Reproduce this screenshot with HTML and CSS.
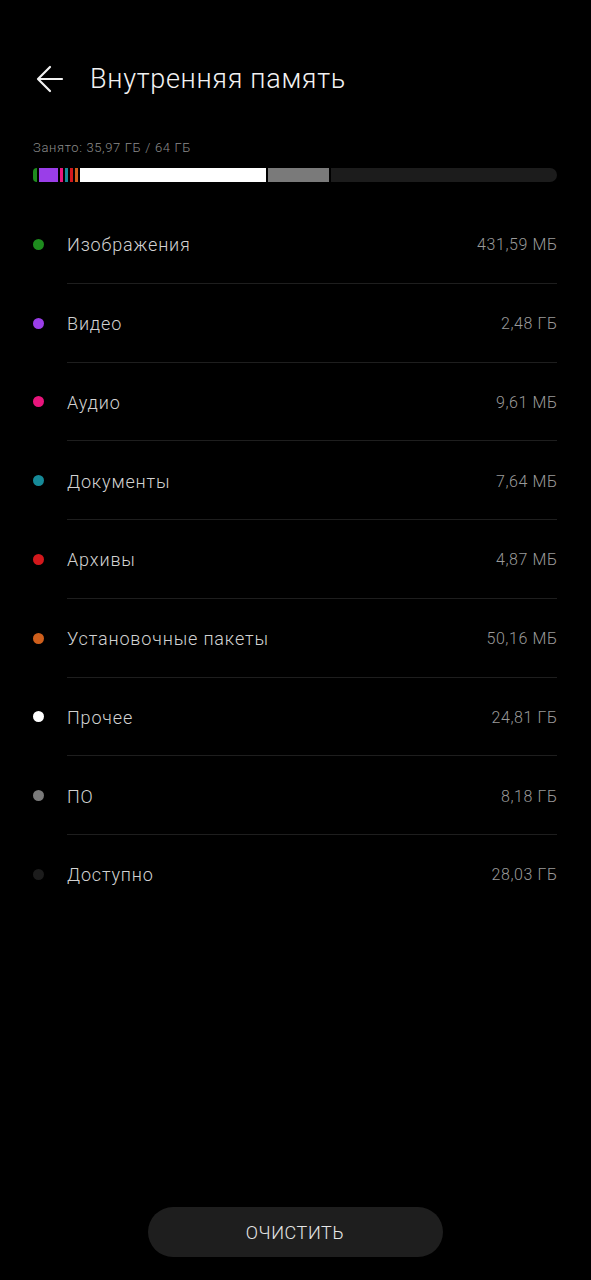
FILE: index.html
```html
<!DOCTYPE html>
<html lang="ru">
<head>
<meta charset="utf-8">
<link rel="stylesheet" href="styles.css">
</head>
<body>
<div class="page">
  <header class="header">
    <svg class="back" width="28" height="28" viewBox="0 0 28 28">
      <path d="M26 14H3M14 2L2 14l12 12" fill="none" stroke="#f2f2f2" stroke-width="2.2" stroke-linecap="round" stroke-linejoin="round"/>
    </svg>
    <h1 class="title">Внутренняя память</h1>
  </header>

  <section class="usage">
    <div class="usage-label">Занято: 35,97 ГБ / 64 ГБ</div>
    <div class="bar">
      <span class="seg seg-first c-green" style="width:4px"></span>
      <span class="seg c-purple" style="width:19px"></span>
      <span class="seg c-pink" style="width:3px"></span>
      <span class="seg c-teal" style="width:3px"></span>
      <span class="seg c-red" style="width:3px"></span>
      <span class="seg c-orange" style="width:3px"></span>
      <span class="seg c-white" style="width:186px"></span>
      <span class="seg c-grey" style="width:61px"></span>
      <span class="seg seg-last c-free"></span>
    </div>
  </section>

  <ul class="list">
    <li class="row"><span class="dot c-green"></span><div class="row-body"><span class="name">Изображения</span><span class="size">431,59 МБ</span></div></li>
    <li class="row"><span class="dot c-purple"></span><div class="row-body"><span class="name">Видео</span><span class="size">2,48 ГБ</span></div></li>
    <li class="row"><span class="dot c-pink"></span><div class="row-body"><span class="name">Аудио</span><span class="size">9,61 МБ</span></div></li>
    <li class="row"><span class="dot c-teal"></span><div class="row-body"><span class="name">Документы</span><span class="size">7,64 МБ</span></div></li>
    <li class="row"><span class="dot c-red"></span><div class="row-body"><span class="name">Архивы</span><span class="size">4,87 МБ</span></div></li>
    <li class="row"><span class="dot c-orange"></span><div class="row-body"><span class="name">Установочные пакеты</span><span class="size">50,16 МБ</span></div></li>
    <li class="row"><span class="dot c-white"></span><div class="row-body"><span class="name">Прочее</span><span class="size">24,81 ГБ</span></div></li>
    <li class="row"><span class="dot c-grey"></span><div class="row-body"><span class="name">ПО</span><span class="size">8,18 ГБ</span></div></li>
    <li class="row"><span class="dot c-free"></span><div class="row-body"><span class="name">Доступно</span><span class="size">28,03 ГБ</span></div></li>
  </ul>

  <div class="actions">
    <button class="clear-btn">ОЧИСТИТЬ</button>
  </div>
</div>
</body>
</html>
```

FILE: styles.css
```css
* { box-sizing: border-box; }
html, body {
  margin: 0;
  padding: 0;
  background: #000;
}
body {
  font-family: "Roboto", "Noto Sans", sans-serif;
  color: #d0d0d0;
}
.page {
  min-height: 1280px;
  display: flex;
  flex-direction: column;
  padding: 0 34px 0 33px;
}
.header {
  display: flex;
  align-items: center;
  height: 58px;
  margin-top: 50px;
}
.back {
  margin-left: 3px;
  flex: none;
}
.title {
  margin: 0 0 0 26px;
  font-size: 27px;
  font-weight: 300;
  color: #f2f2f2;
  letter-spacing: 0.7px;
}
.usage {
  margin-top: 32px;
}
.usage-label {
  font-size: 13px;
  line-height: 16px;
  font-weight: 300;
  color: #8c8c8c;
  letter-spacing: 0.65px;
}
.bar {
  margin-top: 12px;
  height: 14px;
  display: flex;
  gap: 2px;
}
.seg {
  display: block;
  height: 100%;
  flex: none;
}
.seg-first { border-radius: 7px 0 0 7px; }
.seg-last { flex: 1; border-radius: 0 7px 7px 0; }
.c-green { background: #1e8c1e; }
.c-purple { background: #9a3ee8; }
.c-pink { background: #e8157c; }
.c-teal { background: #168a98; }
.c-red { background: #d3181c; }
.c-orange { background: #cf5f1c; }
.c-white { background: #ffffff; }
.c-grey { background: #7a7a7a; }
.c-free { background: #1c1c1c; }
.list {
  list-style: none;
  margin: 23px 0 0;
  padding: 0;
}
.row {
  display: flex;
  align-items: stretch;
  height: 78.75px;
}
.dot {
  width: 11px;
  height: 11px;
  border-radius: 50%;
  align-self: center;
  margin-right: 23px;
  flex: none;
}
.row-body {
  flex: 1;
  display: flex;
  align-items: center;
  justify-content: space-between;
  border-bottom: 1px solid #1e1e1e;
  padding-top: 2px;
}
.row:last-child .row-body { border-bottom-color: transparent; }
.name {
  font-size: 18px;
  font-weight: 300;
  color: #d2d2d2;
  letter-spacing: 0.85px;
}
.size {
  font-size: 16px;
  font-weight: 300;
  color: #9a9a9a;
  letter-spacing: 0.6px;
  margin-right: -0.6px;
}
.actions {
  margin-top: auto;
  margin-bottom: 23px;
  display: flex;
  justify-content: center;
}
.clear-btn {
  width: 295px;
  height: 50px;
  border: none;
  border-radius: 25px;
  background: #1e1e1e;
  color: #e6e6e6;
  font-family: "Roboto", "Noto Sans", sans-serif;
  font-size: 18px;
  font-weight: 300;
  letter-spacing: 0.6px;
}
```
